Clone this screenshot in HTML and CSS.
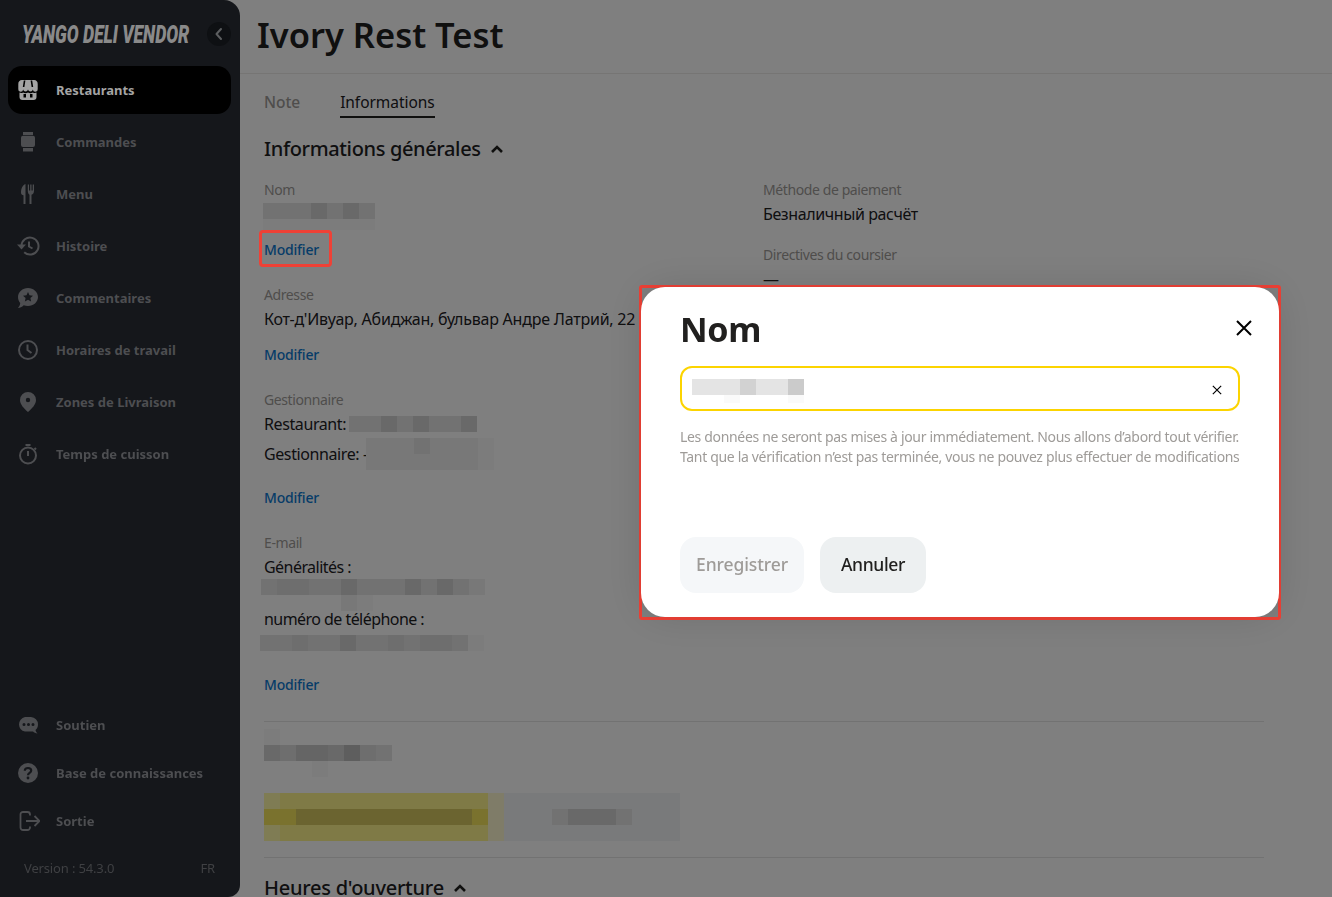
FILE: index.html
```html
<!DOCTYPE html>
<html lang="fr">
<head>
<meta charset="utf-8">
<title>Ivory Rest Test</title>
<link rel="stylesheet" href="styles.css">
</head>
<body>
<div class="app">
  <aside class="sidebar">
    <div class="brand">
      <span class="logo">YANGO DELI VENDOR</span>
      <button class="collapse"><svg viewBox="0 0 24 24" width="24" height="24"><path d="M14 7l-4.5 5 4.5 5" fill="none" stroke="currentColor" stroke-width="2" stroke-linecap="round" stroke-linejoin="round"/></svg></button>
    </div>
    <nav class="nav">
      <a class="item active"><svg viewBox="0 0 24 24" class="ic"><path fill="currentColor" d="M6 2h12a4 4 0 0 1 3.7 4v5.2a2.4 2.4 0 0 1-4.8.4 2.5 2.5 0 0 1-4.9 0 2.5 2.5 0 0 1-4.9 0 2.4 2.4 0 0 1-4.8-.4V6A4 4 0 0 1 6 2z"/><path stroke="#000" stroke-width="1.6" d="M8.600 2.500L7.600 9M15.400 2.500l1 6.500"/><path fill="currentColor" fill-rule="evenodd" d="M3.500 14.600c1.200.6 2.600.5 3.600-.2 1.400 1 3.500 1 4.900 0 1.400 1 3.500 1 4.900 0 1 .7 2.400.8 3.600.2V19a3 3 0 0 1-3 3h-11a3 3 0 0 1-3-3zM7.500 16v3.500h2.500V16zM14 16v3.500h2.500V16z"/></svg>Restaurants</a>
      <a class="item"><svg viewBox="0 0 24 24" class="ic"><path fill="currentColor" d="M7 2h10v3H7zM7 5.800h10a2 2 0 0 1 2 2V15a2 2 0 0 1-2 2H7a2 2 0 0 1-2-2V7.800a2 2 0 0 1 2-2zM7 18h10v3.500H7z"/></svg>Commandes</a>
      <a class="item"><svg viewBox="0 0 24 24" class="ic"><path fill="currentColor" d="M9.500 2C6.500 3 5 7 5 10.500 5 12.500 6 13 7.500 13.200V22h2zM11.800 2.500h1.200v6h1.200v-6h1.300v6h1.200v-6h1.300V9c0 2-1 3.300-2.500 3.700V22h-2v-9.300C12.800 12.300 11.800 11 11.800 9z"/></svg>Menu</a>
      <a class="item"><svg viewBox="0 0 24 24" class="ic"><path fill="none" stroke="currentColor" stroke-width="2" d="M5.500 12a8.500 8.500 0 1 1 2.700 6.300"/><path fill="currentColor" d="M1 10.500h9l-4.500 5z"/><path fill="none" stroke="currentColor" stroke-width="2" d="M13 7.500v5l3.500 2"/></svg>Histoire</a>
      <a class="item"><svg viewBox="0 0 24 24" class="ic"><path fill="currentColor" fill-rule="evenodd" d="M12 2c5.500 0 10 4 10 9s-4.500 9-10 9c-1.500 0-3-.3-4.300-.8C6 21 4 22 2 22c1.300-1.500 2-3 2.200-5C2.800 15.500 2 13.300 2 11c0-5 4.500-9 10-9zM12 6l-1.500 3.300-3.500.4 2.600 2.400-.7 3.500 3.100-1.800 3.100 1.800-.7-3.500 2.600-2.400-3.500-.4z"/></svg>Commentaires</a>
      <a class="item"><svg viewBox="0 0 24 24" class="ic"><circle cx="12" cy="12" r="9" fill="none" stroke="currentColor" stroke-width="2"/><path fill="none" stroke="currentColor" stroke-width="2" d="M11.500 6.500V12l4 3"/></svg>Horaires de travail</a>
      <a class="item"><svg viewBox="0 0 24 24" class="ic"><path fill="currentColor" fill-rule="evenodd" d="M12 2a8 8 0 0 1 8 8c0 4.500-4 8.500-8 12-4-3.500-8-7.500-8-12a8 8 0 0 1 8-8zm0 5.800a2.200 2.200 0 1 0 0 4.400 2.200 2.200 0 0 0 0-4.400z"/></svg>Zones de Livraison</a>
      <a class="item"><svg viewBox="0 0 24 24" class="ic"><circle cx="12" cy="13.500" r="8" fill="none" stroke="currentColor" stroke-width="2"/><path fill="none" stroke="currentColor" stroke-width="2" d="M9.500 3h5M12 9v5M18.500 6l1.500 1.500"/></svg>Temps de cuisson</a>
    </nav>
    <nav class="nav-bottom">
      <a class="item short"><svg viewBox="0 0 24 24" class="ic"><path fill="currentColor" fill-rule="evenodd" d="M9 4h6a7.500 7.500 0 0 1 7 7.500c0 2.500-1 4.200-2.500 5.500.3 1.500 1 2.500 2 3.500-2-.2-3.500-1-4.500-2H9a7.500 7.500 0 0 1-6-7A7.500 7.500 0 0 1 9 4zM8 10a1.500 1.500 0 1 0 0 3 1.500 1.500 0 0 0 0-3zm4.500 0a1.500 1.500 0 1 0 0 3 1.500 1.500 0 0 0 0-3zm4.500 0a1.500 1.500 0 1 0 0 3 1.500 1.500 0 0 0 0-3z"/></svg>Soutien</a>
      <a class="item short"><svg viewBox="0 0 24 24" class="ic"><circle cx="12" cy="12" r="10" fill="currentColor"/><path fill="none" stroke="#15171b" stroke-width="2.200" d="M8.800 9.800C8.800 7.900 10.200 7 12 7s3.200 1 3.200 2.600c0 2.400-3.200 2.200-3.200 4.600"/><circle cx="12" cy="17" r="1.400" fill="#15171b"/></svg>Base de connaissances</a>
      <a class="item short"><svg viewBox="0 0 24 24" class="ic"><path fill="none" stroke="currentColor" stroke-width="1.800" d="M14 6.500V5.500A2.500 2.500 0 0 0 11.500 3H7a2.500 2.500 0 0 0-2.500 2.500v13A2.500 2.500 0 0 0 7 21h4.500A2.500 2.500 0 0 0 14 18.500v-1M10 12h13M18.500 7l5 5-5 5"/></svg>Sortie</a>
    </nav>
    <div class="foot"><span>Version : 54.3.0</span><span class="lang">FR</span></div>
  </aside>

  <main class="main">
    <header class="head"><h1>Ivory Rest Test</h1></header>
    <div class="body">
      <div class="tabs"><span class="tab">Note</span><span class="tab on">Informations</span></div>
      <h2 class="sec">Informations générales <svg viewBox="0 0 16 16" class="chev"><path d="M3 11l5-5 5 5" fill="none" stroke="currentColor" stroke-width="2.600"/></svg></h2>
      <div class="cols">
        <div class="col-l">
          <section class="field">
            <div class="label">Nom</div>
            <div class="blur blur-nom"><i class="g3"></i><i class="g3"></i><i class="g3"></i><i class="g5"></i><i class="g3"></i><i class="g5"></i><i class="g3"></i><i class="g1"></i><i class="g1"></i><i class="g1"></i><i class="g1"></i><i class="g1"></i><i class="g1"></i><i class="g1"></i></div>
            <a class="mod mod-a">Modifier</a>
          </section>
          <section class="field">
            <div class="label">Adresse</div>
            <div class="val addr">Кот-д'Ивуар, Абиджан, бульвар Андре Латрий, 22</div>
            <a class="mod">Modifier</a>
          </section>
          <section class="field">
            <div class="label">Gestionnaire</div>
            <div class="val row">Restaurant:<div class="blur blur-rest"><i class="g3"></i><i class="g3"></i><i class="g5"></i><i class="g3"></i><i class="g5"></i><i class="g3"></i><i class="g3"></i><i class="g5"></i></div></div>
            <div class="val row gap">Gestionnaire: -<div class="blur blur-gest"><i class="g2"></i><i class="g2"></i><i class="g2"></i><i class="g3"></i><i class="g2"></i><i class="g2"></i><i class="g2"></i><i class="g1"></i><i class="g2"></i><i class="g2"></i><i class="g2"></i><i class="g2"></i><i class="g2"></i><i class="g2"></i><i class="g2"></i><i class="g1"></i></div></div>
            <a class="mod mod-b">Modifier</a>
          </section>
          <section class="field last">
            <div class="label">E-mail</div>
            <div class="val tight">Généralités :</div>
            <div class="blur blur-mail"><i class="g3"></i><i class="g4"></i><i class="g4"></i><i class="g3"></i><i class="g3"></i><i class="g5"></i><i class="g3"></i><i class="g3"></i><i class="g3"></i><i class="g5"></i><i class="g3"></i><i class="g5"></i><i class="g3"></i><i class="g2"></i><i></i><i></i><i></i><i></i><i></i><i class="g2"></i><i class="g1"></i><i></i><i></i><i></i><i></i><i></i><i></i><i></i></div>
            <div class="val tight">numéro de téléphone :</div>
            <div class="blur blur-tel"><i class="g3"></i><i class="g3"></i><i class="g4"></i><i class="g3"></i><i class="g3"></i><i class="g5"></i><i class="g3"></i><i class="g3"></i><i class="g4"></i><i class="g3"></i><i class="g4"></i><i class="g4"></i><i class="g3"></i><i class="g1"></i></div>
            <a class="mod mod-c">Modifier</a>
          </section>
        </div>
        <div class="col-r">
          <section class="field">
            <div class="label">Méthode de paiement</div>
            <div class="val">Безналичный расчёт</div>
          </section>
          <section class="field">
            <div class="label">Directives du coursier</div>
            <div class="val">—</div>
          </section>
        </div>
      </div>
      <hr class="rule">
      <div class="blur blur-card"><i class="g1"></i><i></i><i></i><i></i><i></i><i></i><i></i><i></i><i class="g5"></i><i class="g4"></i><i class="g6"></i><i class="g6"></i><i class="g5"></i><i class="g7"></i><i class="g4"></i><i class="g3"></i><i></i><i></i><i></i><i class="g1"></i><i></i><i></i><i></i><i></i></div>
      <div class="blur blur-btns"><i class="y2"></i><i class="y1"></i><i class="y1"></i><i class="y1"></i><i class="y1"></i><i class="y1"></i><i class="y1"></i><i class="y1"></i><i class="y1"></i><i class="y1"></i><i class="y1"></i><i class="y1"></i><i class="y1"></i><i class="y1"></i><i class="t1"></i><i class="b1"></i><i class="b1"></i><i class="b1"></i><i class="b1"></i><i class="b1"></i><i class="b1"></i><i class="b1"></i><i class="b1"></i><i class="b1"></i><i class="b1"></i><i class="b1"></i>
        <i class="y3"></i><i class="y3"></i><i class="y4"></i><i class="y4"></i><i class="y4"></i><i class="y4"></i><i class="y4"></i><i class="y4"></i><i class="y4"></i><i class="y4"></i><i class="y4"></i><i class="y4"></i><i class="y4"></i><i class="y3"></i><i class="t1"></i><i class="b1"></i><i class="b1"></i><i class="b1"></i><i class="g3"></i><i class="g5"></i><i class="g5"></i><i class="g5"></i><i class="g3"></i><i class="b1"></i><i class="b1"></i><i class="b1"></i>
        <i class="y2"></i><i class="y1"></i><i class="y1"></i><i class="y1"></i><i class="y1"></i><i class="y1"></i><i class="y1"></i><i class="y1"></i><i class="y1"></i><i class="y1"></i><i class="y1"></i><i class="y1"></i><i class="y1"></i><i class="y1"></i><i class="t1"></i><i class="b1"></i><i class="b1"></i><i class="b1"></i><i class="b1"></i><i class="b1"></i><i class="b1"></i><i class="b1"></i><i class="b1"></i><i class="b1"></i><i class="b1"></i><i class="b1"></i></div>
      <hr class="rule rule-b">
      <h2 class="sec sec-h">Heures d'ouverture <svg viewBox="0 0 16 16" class="chev"><path d="M3 11l5-5 5 5" fill="none" stroke="currentColor" stroke-width="2.600"/></svg></h2>
    </div>
  </main>
</div>

<div class="overlay"></div>
<div class="mark mark-link"></div>
<div class="mark mark-modal"></div>
<div class="modal">
  <div class="modal-head">
    <h3>Nom</h3>
    <svg viewBox="0 0 16 16" class="x-big"><path d="M1 1l14 14M15 1L1 15" fill="none" stroke="currentColor" stroke-width="2"/></svg>
  </div>
  <div class="input">
    <div class="blur blur-input"><i class="g3"></i><i class="g3"></i><i class="g3"></i><i class="g5"></i><i class="g3"></i><i class="g3"></i><i class="g6"></i><i></i><i></i><i class="f"></i><i></i><i></i><i></i><i class="f"></i></div>
    <svg viewBox="0 0 12 12" class="x-small"><path d="M1 1l10 10M11 1L1 11" fill="none" stroke="currentColor" stroke-width="1.400"/></svg>
  </div>
  <p class="hint">Les données ne seront pas mises à jour immédiatement. Nous allons d’abord tout vérifier.<br>Tant que la vérification n’est pas terminée, vous ne pouvez plus effectuer de modifications</p>
  <div class="actions">
    <button class="btn off">Enregistrer</button>
    <button class="btn">Annuler</button>
  </div>
</div>
</body>
</html>
```

FILE: styles.css
```css
* { box-sizing: border-box; }
html, body { margin: 0; height: 100%; overflow: hidden; }
body { font-family: "Noto Sans", "Open Sans", sans-serif; color: #21201f; background: #fff; }
.app { display: flex; height: 897px; }

.sidebar { position: relative; z-index: 3; flex: 0 0 240px; display: flex; flex-direction: column; height: 100%; background: #15171b; border-radius: 0 16px 12px 0; color: #4d4e51; font-weight: 700; font-size: 13px; }
.brand { display: flex; align-items: center; height: 66px; padding: 0 9px 0 22px; justify-content: space-between; }
.logo { flex: none; width: 168px; margin-top: 3px; font-family: Roboto, sans-serif; font-style: italic; font-weight: 900; font-size: 25px; line-height: 28px; letter-spacing: -.1px; color: #8a8a8a; white-space: nowrap; transform: scaleX(.71); transform-origin: left center; }
.collapse { width: 24px; height: 24px; padding: 0; border: 0; border-radius: 50%; background: #0e1013; color: #5c5e60; margin-top: 2px; }
.collapse svg { display: block; }
.nav { display: flex; flex-direction: column; gap: 4px; padding: 0 9px 0 8px; }
.nav-bottom { display: flex; flex-direction: column; margin-top: auto; padding: 0 9px 0 8px; }
.item { display: flex; align-items: center; gap: 16px; height: 48px; padding-left: 8px; border-radius: 14px; }
.item.active { background: #000; color: #a4a4a4; }
.ic { flex: 0 0 24px; width: 24px; height: 24px; }
.foot { display: flex; justify-content: space-between; align-items: center; height: 46px; padding: 0 25px 0 24px; margin-bottom: 6px; font-weight: 400; font-size: 13px; letter-spacing: -.15px; color: #3f4043; }

.main { flex: 1; min-width: 0; }
.head { height: 74px; border-bottom: 1px solid #eceae8; padding: 11px 0 0 17px; }
h1 { margin: 0; font-size: 34.500px; line-height: 48px; font-weight: 600; }
.body { padding: 0 68px 0 24px; }
.tabs { display: flex; gap: 40px; height: 44px; padding-top: 18px; font-size: 15.500px; font-weight: 500; line-height: 20px; letter-spacing: -.05px; }
.tab { color: #9e9b98; }
.tab.on { color: #21201f; height: 26px; border-bottom: 2px solid #21201f; font-weight: 400; }
.sec { display: flex; align-items: center; gap: 8px; margin: 0; font-size: 20px; font-weight: 500; line-height: 26px; height: 26px; letter-spacing: -.36px; }
.sec-h { letter-spacing: -.25px; }
.body > .tabs + .sec { margin-top: 18px; }
.chev { width: 16px; height: 16px; }
.cols { display: grid; grid-template-columns: 499px 1fr; margin-top: 18px; }
.field { display: flex; flex-direction: column; align-items: flex-start; margin-bottom: 25px; }
.field.last { margin-bottom: 0; }
.col-r .field { margin-bottom: 19px; }
.label { font-size: 14px; line-height: 20px; color: #9e9b98; letter-spacing: -.4px; }
.val { font-size: 16px; line-height: 24px; margin-top: 2px; white-space: nowrap; letter-spacing: -.4px; }
.val.tight { letter-spacing: -.55px; }
.val.addr { letter-spacing: -.22px; }
.row { display: flex; align-items: center; height: 24px; }
.row.gap { margin-top: 6px; }
.mod { margin-top: 14px; font-size: 14px; line-height: 20px; color: #0c78d0; font-weight: 500; letter-spacing: -.2px; }
.mod-a { margin-top: 10px; }
.mod-b { margin-top: 22px; }
.mod-c { margin-top: 24px; }

.blur { display: grid; grid-auto-rows: 16px; grid-template-columns: repeat(auto-fill, 16px); overflow: hidden; flex: none; }
.blur i { display: block; }
.blur-nom { width: 112px; height: 27px; margin: 3px 0 0 -1px; }
.blur-rest { width: 128px; height: 16px; margin-left: 3px; }
.blur-gest { width: 128px; height: 32px; margin-left: -2px; }
.blur-mail { width: 224px; height: 32px; margin-left: -3px; margin-bottom: -6px; }
.blur-tel { width: 224px; height: 16px; margin: 4px 0 0 -4px; }
.blur-card { width: 128px; height: 48px; margin-top: 7px; }
.blur-btns { width: 416px; height: 48px; margin-top: 16px; }
.blur-input { width: 112px; height: 24px; }
.g1 { background: #f9f9f9; }
.g2 { background: #f0f0f0; }
.g3 { background: #e4e4e4; }
.g4 { background: #dcdcdc; }
.g5 { background: #d2d2d2; }
.g6 { background: #cbcbcb; }
.g7 { background: #bcbcbc; }
.f { background: #fafafa; }
.y1 { background: #fff48c; }
.y2 { background: #fff8a8; }
.y3 { background: #f5e45c; }
.y4 { background: #d6c860; }
.t1 { background: #fff8d0; }
.b1 { background: #f2f4f6; }

.rule { border: 0; border-top: 1px solid #e4e4e4; margin: 26px 0 0; }
.rule-b { margin: 16px 0 17px; }

.overlay { position: fixed; inset: 0; z-index: 2; background: rgba(0, 0, 0, .5); }
.mark { position: fixed; z-index: 4; border: 3px solid #ef4136; }
.mark-link { left: 259px; top: 230px; width: 73px; height: 37px; border-radius: 4px; }
.mark-modal { left: 639px; top: 285px; width: 642px; height: 335px; border-radius: 3px; }
.modal { position: fixed; z-index: 5; left: 641px; top: 287px; width: 638px; height: 330px; padding: 18px 39px 0; background: #fff; border-radius: 24px; box-shadow: 0 0 40px rgba(0, 0, 0, .12); }
.modal-head { display: flex; justify-content: space-between; align-items: center; height: 48px; }
h3 { margin: 0; font-size: 34px; font-weight: 700; line-height: 48px; letter-spacing: -.3px; }
.x-big { width: 16px; height: 16px; margin-right: -12px; margin-top: -2px; color: #000; }
.input { display: flex; align-items: flex-start; justify-content: space-between; height: 45px; margin-top: 13px; padding: 11px 16px 0 10px; border: 2px solid #fcd400; border-radius: 12px; width: 560px; }
.x-small { width: 10px; height: 10px; margin-top: 6px; color: #000; }
.hint { margin: 16px 0 0; font-size: 14px; line-height: 20px; color: #9e9b98; white-space: nowrap; letter-spacing: -.33px; }
.actions { display: flex; gap: 16px; margin-top: 70px; }
.btn { height: 56px; padding: 0 21px 2px; border: 0; border-radius: 16px; background: #edf0f1; color: #21201f; font: 500 17.500px "Noto Sans", sans-serif; letter-spacing: -.35px; }
.btn.off { background: #f5f7f9; color: #9e9b98; padding: 0 16px 2px; letter-spacing: -.1px; }
```
